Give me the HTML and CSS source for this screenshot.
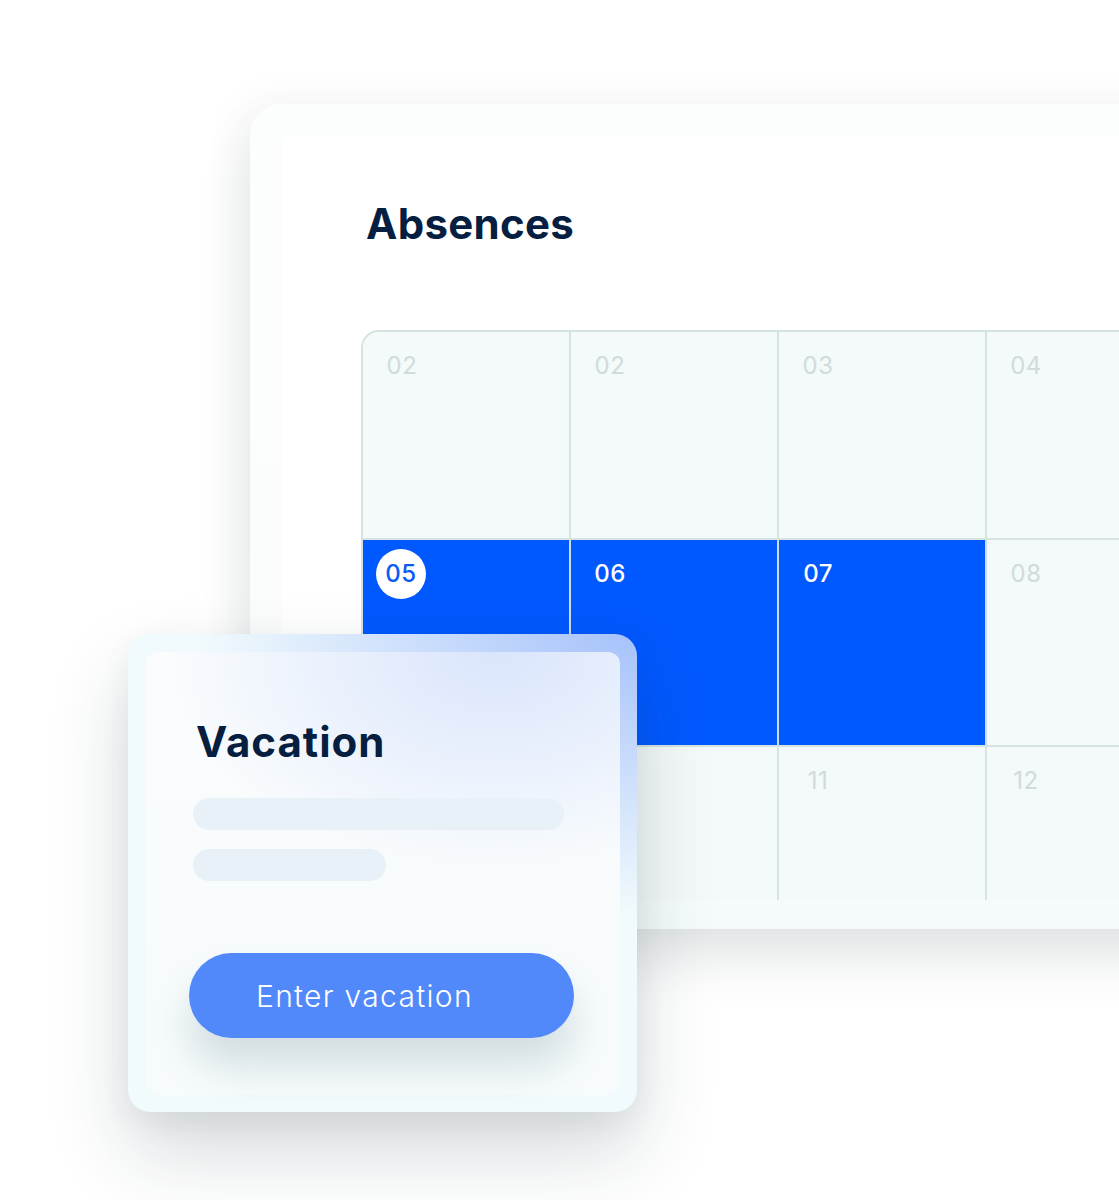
FILE: index.html
```html
<!DOCTYPE html>
<html lang="en">
<head>
<meta charset="utf-8">
<title>Absences</title>
<link rel="stylesheet" href="styles.css">
</head>
<body>
<div class="stage">
  <div class="main-card">
    <div class="main-inner">
      <h1 class="title">Absences</h1>
      <div class="grid">
        <div class="cell"><span class="num">02</span></div>
        <div class="cell"><span class="num">02</span></div>
        <div class="cell"><span class="num">03</span></div>
        <div class="cell"><span class="num">04</span></div>
        <div class="cell blue"><span class="num today">05</span></div>
        <div class="cell blue"><span class="num">06</span></div>
        <div class="cell blue"><span class="num">07</span></div>
        <div class="cell"><span class="num">08</span></div>
        <div class="cell last"><span class="num">09</span></div>
        <div class="cell last"><span class="num">10</span></div>
        <div class="cell last"><span class="num">11</span></div>
        <div class="cell last"><span class="num">12</span></div>
      </div>
    </div>
  </div>

  <div class="vacation-card">
    <div class="vacation-inner">
      <h2 class="vac-title">Vacation</h2>
      <div class="bar bar-long"></div>
      <div class="bar bar-short"></div>
      <button class="btn">Enter vacation</button>
    </div>
  </div>
</div>
</body>
</html>
```

FILE: styles.css
```css
html, body {
  margin: 0;
  padding: 0;
  background: #ffffff;
}

body {
  font-family: Inter, "Open Sans", "DejaVu Sans", sans-serif;
  overflow: hidden;
}

.stage {
  position: relative;
  width: 1119px;
  height: 1200px;
  overflow: hidden;
  padding-top: 104px;
  box-sizing: border-box;
}

.main-card {
  margin-left: 250px;
  width: 960px;
  padding: 31px 0 29px 32px;
  background: linear-gradient(to bottom, #fcfdfd 0%, #fbfcfc 60%, #f5fbfb 100%);
  border-top-left-radius: 32px;
  box-shadow: 0 30px 50px rgba(40, 60, 70, 0.13), -12px -6px 40px rgba(40, 60, 70, 0.04);
}

.main-inner {
  background: #ffffff;
  border-top-left-radius: 10px;
  padding: 64px 0 0 79px;
}

.title {
  margin: 0 0 81px 5px;
  font-size: 42px;
  line-height: 50px;
  font-weight: 700;
  color: #061e40;
  letter-spacing: 0.3px;
}

.grid {
  display: grid;
  grid-template-columns: repeat(4, 208px);
  grid-template-rows: 208px 207px 153px;
  border-left: 2px solid #d5e3e1;
  border-top: 2px solid #d5e3e1;
  border-top-left-radius: 18px;
  overflow: hidden;
  width: 834px;
  box-sizing: border-box;
}

.cell {
  background: #f4f9f9;
  border-right: 2px solid #d5e3e1;
  border-bottom: 2px solid #d5e3e1;
  padding: 9px 0 0 14px;
  box-sizing: border-box;
}

.cell.last {
  border-bottom: none;
}

.cell.blue {
  background: #0059ff;
  border-right-color: #cfdcef;
}

.num {
  display: flex;
  align-items: center;
  justify-content: center;
  width: 50px;
  height: 50px;
  font-size: 24px;
  line-height: 24px;
  font-weight: 400;
  color: #cfdcdb;
  letter-spacing: 0.5px;
}

.blue .num {
  color: #ffffff;
  font-weight: 500;
}

.blue .num.today {
  background: #ffffff;
  border-radius: 50%;
  color: #0a5af5;
  margin-left: -1px;
}

.vacation-card {
  position: absolute;
  left: 128px;
  top: 634px;
  width: 509px;
  height: 478px;
  padding: 18px 17px 17px 18px;
  box-sizing: border-box;
  border-radius: 22px;
  background:
    radial-gradient(ellipse 440px 280px at 100% 0%, #a6c2fb 0%, rgba(166, 194, 251, 0.6) 40%, rgba(166, 194, 251, 0) 100%),
    #f1fafc;
  box-shadow: 0 40px 80px rgba(30, 50, 60, 0.18), 0 10px 30px rgba(30, 50, 60, 0.06);
}

.vacation-inner {
  height: 100%;
  box-sizing: border-box;
  border-radius: 12px;
  padding: 65px 0 0 47px;
  background:
    radial-gradient(ellipse 330px 220px at 74% 0%, #dae5fc 0%, rgba(218, 229, 252, 0) 100%),
    linear-gradient(to bottom, #fafcfd 0%, #f7fbfc 100%);
}

.vac-title {
  margin: 0 0 31px 3px;
  font-size: 42px;
  line-height: 50px;
  font-weight: 700;
  color: #061e40;
  letter-spacing: 1px;
}

.bar {
  height: 32px;
  border-radius: 16px;
  background: #e9f1f8;
}

.bar-long {
  width: 371px;
  margin-bottom: 19px;
}

.bar-short {
  width: 193px;
}

.btn {
  display: block;
  margin: 72px 0 0 -4px;
  width: 385px;
  height: 85px;
  border: none;
  border-radius: 43px;
  background: #5189fb;
  color: #ffffff;
  font-family: Inter, "Open Sans", "DejaVu Sans", sans-serif;
  font-size: 30px;
  font-weight: 300;
  letter-spacing: 1.3px;
  text-align: left;
  padding: 0 0 0 67px;
  box-shadow: 0 28px 40px rgba(60, 110, 120, 0.2);
}
```
